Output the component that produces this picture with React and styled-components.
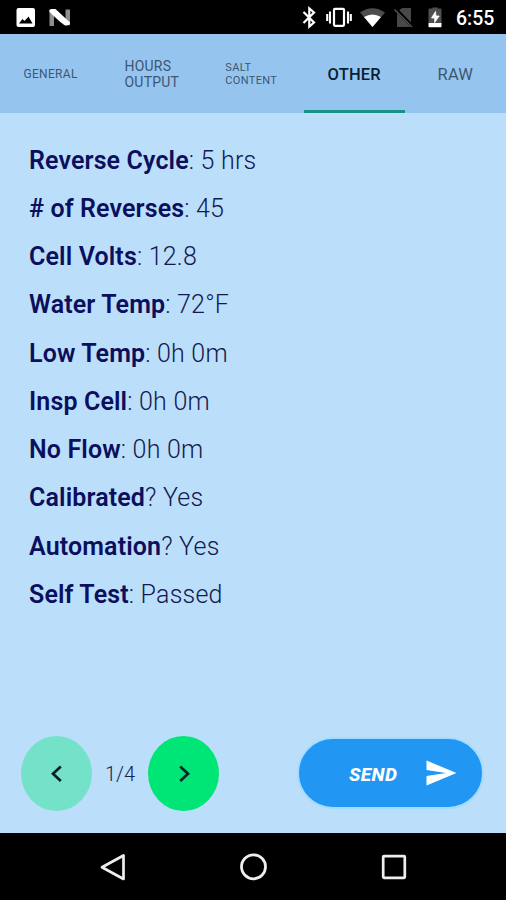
import React from "react";
import styled, { createGlobalStyle } from "styled-components";

const GlobalStyle = createGlobalStyle`
  * { box-sizing: border-box; }
  body { margin: 0; background: #000; font-family: Roboto, "Liberation Sans", sans-serif; }
  button { font-family: inherit; border: 0; padding: 0; margin: 0; }
`;

const Screen = styled.div`
  display: flex;
  flex-direction: column;
  width: 506px;
  height: 900px;
  overflow: hidden;
  background: #bbdefb;
`;

const StatusBar = styled.header`
  display: flex;
  align-items: center;
  justify-content: space-between;
  flex: none;
  height: 34px;
  padding: 0 11px 0 16px;
  background: #000;
  color: #fff;
`;

const StatusGroup = styled.div`
  display: flex;
  align-items: center;
  svg { display: block; }
`;

const Clock = styled.span`
  width: 39px;
  font-size: 19.5px;
  font-weight: 500;
  line-height: 30px;
  white-space: nowrap;
  padding-top: 3px;
`;

const TabBar = styled.nav`
  display: grid;
  grid-template-columns: repeat(5, 1fr);
  flex: none;
  height: 79px;
  background: #95c5ef;
`;

const Tab = styled.button`
  display: flex;
  align-items: center;
  justify-content: center;
  padding-top: 4px;
  padding-right: ${(p) => p.$shift || 0}px;
  background: transparent;
  border-bottom: 3px solid ${(p) => (p.$active ? "#179187" : "transparent")};
  color: ${(p) => (p.$active ? "#0b1f33" : "#3d5672")};
  font-size: ${(p) => p.$size}px;
  line-height: ${(p) => p.$line}px;
  letter-spacing: ${(p) => p.$spacing}px;
  font-weight: ${(p) => (p.$active ? 500 : 400)};
  text-align: left;
  white-space: pre-line;
`;

const Readings = styled.main`
  flex: 1;
  padding: 23.7px 29px 0;
`;

const Reading = styled.div`
  height: 48.25px;
  line-height: 48.25px;
  font-size: 25px;
  font-weight: 300;
  letter-spacing: 0.22px;
  color: #14194f;
  white-space: nowrap;
`;

const Label = styled.span`
  font-weight: 600;
  color: #0b0f5c;
  letter-spacing: 0.13px;
`;

const ActionBar = styled.footer`
  display: flex;
  align-items: center;
  flex: none;
  height: 119px;
  padding: 0 22px 1px 21px;
`;

const PagerButton = styled.button`
  display: flex;
  align-items: center;
  justify-content: center;
  width: 71px;
  height: 75px;
  border-radius: 50%;
  background: ${(p) => (p.$dim ? "#74e2c8" : "#00e676")};
`;

const PageCount = styled.span`
  width: 56px;
  text-align: center;
  font-size: 20px;
  font-weight: 300;
  color: #17204f;
  padding-top: 2px;
`;

const SendButton = styled.button`
  display: flex;
  align-items: center;
  width: 187px;
  height: 72px;
  margin-left: auto;
  padding-left: 50px;
  border: 2px solid #a4dcff;
  border-radius: 36px;
  background: #2196f3;
  color: #fff;
  font-size: 19px;
  font-weight: 800;
  font-style: italic;
  letter-spacing: 0.4px;
  svg { display: block; margin-left: auto; margin-right: 25px; }
`;

const SendText = styled.span`
  padding-top: 2px;
`;

const NavBar = styled.nav`
  display: grid;
  grid-template-columns: repeat(3, 140.5px);
  justify-content: center;
  align-items: center;
  justify-items: center;
  flex: none;
  height: 67px;
  background: #000;
  svg { display: block; }
`;

const tabs = [
  { text: "GENERAL", size: 12, line: 15, spacing: 0.3 },
  { text: "HOURS\nOUTPUT", size: 14, line: 16.5, spacing: 0.2 },
  { text: "SALT\nCONTENT", size: 11, line: 13, spacing: 0.35, shift: 3.5 },
  { text: "OTHER", size: 16.5, line: 21, spacing: 0.15, active: true },
  { text: "RAW", size: 16.5, line: 21, spacing: 0.2 },
];

const readings = [
  ["Reverse Cycle", ": 5 hrs"],
  ["# of Reverses", ": 45"],
  ["Cell Volts", ": 12.8"],
  ["Water Temp", ": 72°F"],
  ["Low Temp", ": 0h 0m"],
  ["Insp Cell", ": 0h 0m"],
  ["No Flow", ": 0h 0m"],
  ["Calibrated", "? Yes"],
  ["Automation", "? Yes"],
  ["Self Test", ": Passed"],
];

function NotificationIcons() {
  return (
    <svg width="58" height="34" viewBox="0 0 58 34">
      <rect x="0.5" y="8" width="18.5" height="19" rx="2" fill="#fff" />
      <path d="M3 23.500 6.500 19l2 2 4-4.500L16.500 23.500Z" fill="#000" />
      <path d="M33.500 9.500 38 12v14h-4.500ZM49.500 9.500H54v16l-4.500-2Z" fill="#8e8e8e" />
      <path d="M33.500 10Q34 9 36 9h3.500L54 22.500q0 3.500-4.500 3Q47 25 33.500 12Z" fill="#fff" />
    </svg>
  );
}

function SystemIcons() {
  return (
    <svg width="156" height="34" viewBox="0 0 156 34">
      <path d="m3.500 12 10.500 10.500L9.300 26.500V8.500L14 12.500 3.500 23" fill="none" stroke="#fff" strokeWidth="2.200" />
      <rect x="34" y="8.800" width="10" height="17" rx="1" fill="none" stroke="#fff" strokeWidth="2.200" />
      <path d="M30 11.500v12M48 11.500v12M27.200 14v7M50.800 14v7" stroke="#fff" strokeWidth="2.100" />
      <path d="M60 12.500Q72.500 4 85 12.500L72.500 27Z" fill="#4c4c4c" />
      <path d="M64 17Q72.500 12 81 17L72.500 27Z" fill="#fff" />
      <path d="M100 9.500q1-1.500 3-1.500h7q1 0 1 1v18H97V12Z" fill="#484848" />
      <path d="m95.500 9 17.500 18" stroke="#000" strokeWidth="3.500" />
      <path d="m94.500 9.500 17.500 17.500" stroke="#555" strokeWidth="1.500" />
      <path d="M129.500 8.500h3V7.500h5v1h3q1 0 1 1V23H128.500V9.500q0-1 1-1Z" fill="#505050" />
      <path d="M135.500 11.500 131.500 18h3.200v4.500L139.200 16H136Z" fill="#fff" stroke="#fff" strokeWidth=".8" />
      <path d="M128.500 23h13v3.500q0 .8-.8.800h-11.400q-.8 0-.8-.8Z" fill="#fff" />
    </svg>
  );
}

function Chevron({ direction }) {
  return (
    <svg width="24" height="24" viewBox="0 0 24 24" fill="none" stroke="#0b1f2a" strokeWidth="2.700">
      <path d={direction === "left" ? "m15.800 5.500-7.800 7.300 7.800 7.300" : "m8.200 5.500 7.800 7.300-7.800 7.300"} />
    </svg>
  );
}

export default function App() {
  return (
    <>
      <GlobalStyle />
      <Screen>
        <StatusBar>
          <StatusGroup>
            <NotificationIcons />
          </StatusGroup>
          <StatusGroup>
            <SystemIcons />
            <Clock>6:55</Clock>
          </StatusGroup>
        </StatusBar>
        <TabBar>
          {tabs.map((t) => (
            <Tab key={t.text} $size={t.size} $line={t.line} $spacing={t.spacing} $shift={t.shift} $active={t.active}>
              {t.text}
            </Tab>
          ))}
        </TabBar>
        <Readings>
          {readings.map(([label, value]) => (
            <Reading key={label}>
              <Label>{label}</Label>
              {value}
            </Reading>
          ))}
        </Readings>
        <ActionBar>
          <PagerButton $dim aria-label="Previous page">
            <Chevron direction="left" />
          </PagerButton>
          <PageCount>1/4</PageCount>
          <PagerButton aria-label="Next page">
            <Chevron direction="right" />
          </PagerButton>
          <SendButton>
            <SendText>SEND</SendText>
            <svg width="31" height="26" viewBox="0 0 31 26">
              <path d="M.5.500 30.500 13 .5 25.500v-9.500L20 13 .5 10Z" fill="#fff" />
            </svg>
          </SendButton>
        </ActionBar>
        <NavBar>
          <svg width="28" height="30" viewBox="0 0 28 30">
            <path d="M24.500 3.500v23.500L3 15.200Z" fill="none" stroke="#eee" strokeWidth="2.700" strokeLinejoin="round" />
          </svg>
          <svg width="30" height="30" viewBox="0 0 30 30">
            <circle cx="15.500" cy="14.800" r="12" fill="none" stroke="#eee" strokeWidth="2.800" />
          </svg>
          <svg width="30" height="30" viewBox="0 0 30 30">
            <rect x="4.200" y="4.200" width="21.600" height="21.600" rx=".8" fill="none" stroke="#eee" strokeWidth="2.700" />
          </svg>
        </NavBar>
      </Screen>
    </>
  );
}
